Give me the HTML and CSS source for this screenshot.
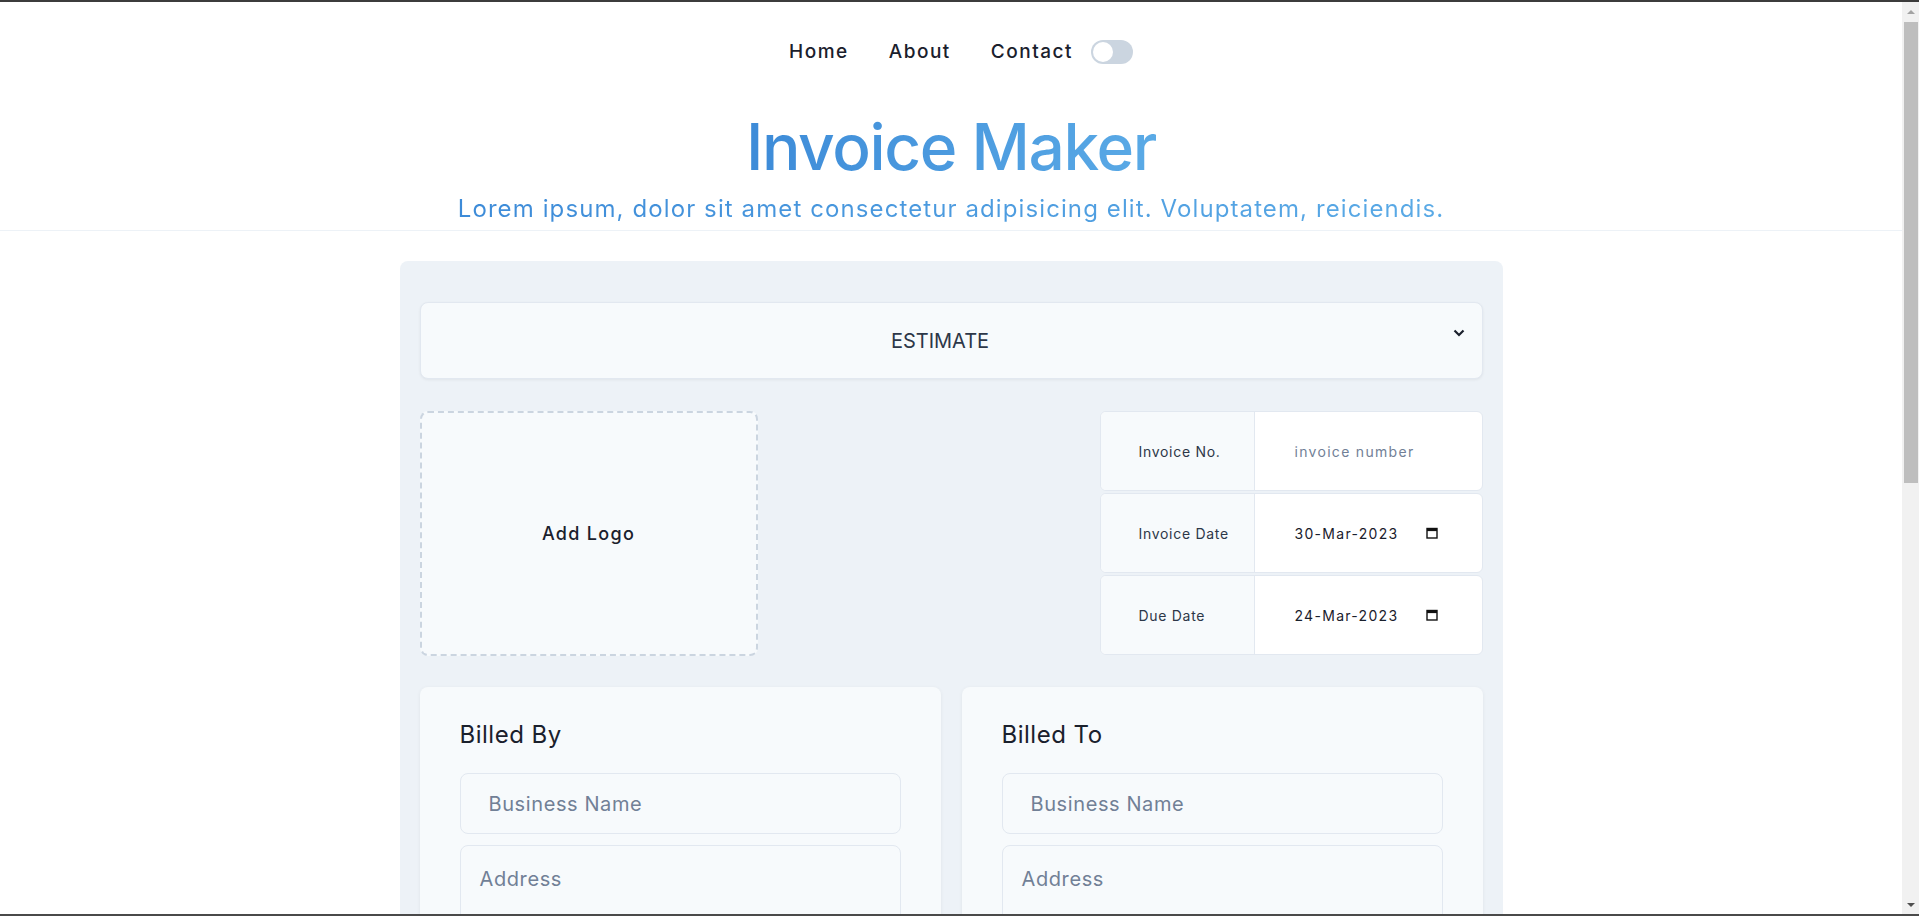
FILE: index.html
```html
<!DOCTYPE html>
<html lang="en">
<head>
<meta charset="utf-8">
<title>Invoice Maker</title>
<link rel="stylesheet" href="styles.css">
</head>
<body>
<div class="frame-top"></div>
<div class="frame-bottom"></div>
<div class="scrollbar" aria-hidden="true">
  <span class="sb-button"><span class="sb-arrow sb-arrow-up"></span></span>
  <span class="sb-track"><span class="sb-thumb"></span></span>
  <span class="sb-button"><span class="sb-arrow sb-arrow-down"></span></span>
</div>
<div class="page">
  <header class="site-header">
    <nav class="nav">
      <a class="nav-link" href="#">Home</a>
      <a class="nav-link" href="#">About</a>
      <a class="nav-link" href="#">Contact</a>
      <span class="toggle"><span class="toggle-knob"></span></span>
    </nav>
    <h1 class="title">Invoice Maker</h1>
    <p class="subtitle">Lorem ipsum, dolor sit amet consectetur adipisicing elit. Voluptatem, reiciendis.</p>
  </header>

  <main class="panel">
    <div class="doc-type">
      <span class="doc-type-text">ESTIMATE</span>
      <svg class="chevron" width="12" height="8" viewBox="0 0 12 8"><polyline points="1.5,1.5 6,6 10.5,1.5" fill="none" stroke="#1a202c" stroke-width="2.2"/></svg>
    </div>

    <div class="meta-row">
      <div class="logo-box">Add Logo</div>
      <div class="meta-table">
        <div class="meta-line">
          <div class="meta-label">Invoice No.</div>
          <div class="meta-value placeholder">invoice number</div>
        </div>
        <div class="meta-line">
          <div class="meta-label">Invoice Date</div>
          <div class="meta-value"><span class="date-text">30-Mar-2023</span><svg class="cal" width="12" height="12" viewBox="0 0 12 12"><rect x="1" y="1.5" width="10" height="9.5" fill="none" stroke="#111" stroke-width="1.4"/><rect x="1" y="1.5" width="10" height="2.6" fill="#111"/></svg></div>
        </div>
        <div class="meta-line">
          <div class="meta-label">Due Date</div>
          <div class="meta-value"><span class="date-text">24-Mar-2023</span><svg class="cal" width="12" height="12" viewBox="0 0 12 12"><rect x="1" y="1.5" width="10" height="9.5" fill="none" stroke="#111" stroke-width="1.4"/><rect x="1" y="1.5" width="10" height="2.6" fill="#111"/></svg></div>
        </div>
      </div>
    </div>

    <div class="parties">
      <section class="party">
        <h2 class="party-title">Billed By</h2>
        <div class="field field-input"><span class="ph">Business Name</span></div>
        <div class="field field-area"><span class="ph">Address</span></div>
        <div class="field field-input"><span class="ph">Email</span></div>
      </section>
      <section class="party">
        <h2 class="party-title">Billed To</h2>
        <div class="field field-input"><span class="ph">Business Name</span></div>
        <div class="field field-area"><span class="ph">Address</span></div>
        <div class="field field-input"><span class="ph">Email</span></div>
      </section>
    </div>

    <section class="items">
      <div class="items-head">
        <span>Item</span><span>Quantity</span><span>Rate</span><span>Amount</span>
      </div>
      <div class="items-row">
        <div class="field field-input"><span class="ph">Item name</span></div>
        <div class="field field-input"><span class="ph">1</span></div>
        <div class="field field-input"><span class="ph">0</span></div>
        <div class="field field-input"><span class="ph">0.00</span></div>
      </div>
      <button class="btn-add" type="button">+ Add Item</button>
    </section>

    <div class="actions">
      <button class="btn" type="button">Download PDF</button>
      <button class="btn btn-light" type="button">Reset</button>
    </div>
  </main>

  <footer class="site-footer">© 2023 Invoice Maker</footer>
</div>
</body>
</html>
```
FILE: styles.css
```css
* { box-sizing: border-box; }
html, body { margin: 0; padding: 0; }

body {
  font-family: "Inter", "Noto Sans", sans-serif;
  color: #1a202c;
  background: #ffffff;
}

/* window frame lines and classic scrollbar */
.frame-top, .frame-bottom {
  position: fixed;
  left: 0;
  right: 0;
  height: 2px;
  background: #3c3c3c;
  z-index: 20;
}
.frame-top { top: 0; }
.frame-bottom { bottom: 0; background: #4a4a4a; }
.scrollbar {
  position: fixed;
  top: 0;
  right: 0;
  bottom: 0;
  width: 17px;
  background: #f1f1f1;
  display: flex;
  flex-direction: column;
  z-index: 10;
}
.sb-button {
  height: 17px;
  display: flex;
  align-items: center;
  justify-content: center;
  flex: none;
}
.sb-track {
  flex: 1;
  padding: 5px 1px 0 2px;
}
.sb-thumb {
  display: block;
  height: 461px;
  background: #bebebe;
}
.sb-arrow {
  width: 0;
  height: 0;
  border-left: 4px solid transparent;
  border-right: 4px solid transparent;
}
.sb-arrow-up { border-bottom: 4px solid #a3a3a3; margin-top: 6px; }
.sb-arrow-down { border-top: 4px solid #505050; margin-bottom: 6px; }

.page {
  margin-right: 17px;
  min-height: 1760px;
}

.site-header {
  border-bottom: 1px solid #edf2f7;
  text-align: center;
  padding-bottom: 5px;
}
.nav {
  display: flex;
  justify-content: center;
  align-items: center;
  padding-top: 38px;
  height: 66px;
}
.nav-link {
  padding: 0 20px;
  font-size: 19px;
  line-height: 28px;
  font-weight: 500;
  letter-spacing: 1.5px;
  color: #1a202c;
  text-decoration: none;
}
.toggle {
  display: inline-flex;
  align-items: center;
  width: 42px;
  height: 24px;
  border-radius: 12px;
  background: #cbd5e0;
  padding: 2px;
  margin-left: -2px;
}
.toggle-knob {
  width: 20px;
  height: 20px;
  border-radius: 50%;
  background: #ffffff;
}
.title {
  margin: 43px 0 0;
  font-size: 64px;
  line-height: 76px;
  font-weight: 500;
  letter-spacing: -1.4px;
  background: linear-gradient(90deg, #3d8bd8, #5aaae6);
  -webkit-background-clip: text;
  background-clip: text;
  color: transparent;
  display: inline-block;
}
.subtitle {
  margin: 8px auto 0;
  font-size: 24px;
  line-height: 32px;
  letter-spacing: 1.1px;
  background: linear-gradient(90deg, #3d8bd8, #5aaae6);
  -webkit-background-clip: text;
  background-clip: text;
  color: transparent;
  width: fit-content;
}

.panel {
  width: 1103px;
  margin: 30px auto 40px;
  background: #edf2f7;
  border-radius: 8px;
  padding: 41px 20px 40px;
}
.doc-type {
  position: relative;
  height: 77px;
  display: flex;
  align-items: center;
  justify-content: center;
  padding-right: 22px;
  background: #f7fafc;
  border: 1px solid #e2e8f0;
  border-radius: 8px;
  box-shadow: 0 1px 3px rgba(0,0,0,0.06);
}
.doc-type-text {
  font-size: 20px;
  color: #2d3748;
}
.chevron {
  position: absolute;
  right: 17px;
  top: 26px;
}

.meta-row {
  margin-top: 32px;
  display: flex;
  justify-content: space-between;
  align-items: flex-start;
}
.logo-box {
  width: 338px;
  height: 245px;
  border: 2px dashed #cbd5e0;
  border-radius: 8px;
  background: #f7fafc;
  display: flex;
  align-items: center;
  justify-content: center;
  font-size: 18px;
  font-weight: 500;
  letter-spacing: 1.3px;
  color: #1a202c;
}
.meta-table {
  width: 383px;
  display: flex;
  flex-direction: column;
  gap: 2px;
}
.meta-line {
  display: flex;
  height: 80px;
  border: 1px solid #e2e8f0;
  border-radius: 6px;
  overflow: hidden;
  background: #ffffff;
}
.meta-label {
  width: 154px;
  background: #f7fafc;
  border-right: 1px solid #e2e8f0;
  display: flex;
  align-items: center;
  padding-left: 38px;
  font-size: 14px;
  letter-spacing: 0.7px;
  color: #2d3748;
}
.meta-value {
  flex: 1;
  display: flex;
  align-items: center;
  padding-left: 40px;
  padding-right: 44px;
  font-size: 14px;
  letter-spacing: 1.3px;
  color: #1a202c;
  justify-content: space-between;
}
.meta-value.placeholder { color: #718096; justify-content: flex-start; }

.parties {
  margin-top: 31px;
  display: grid;
  grid-template-columns: 1fr 1fr;
  gap: 21px;
}
.party {
  background: #f7fafc;
  border-radius: 8px;
  padding: 30px 40px 40px;
  box-shadow: 0 1px 4px rgba(0,0,0,0.06);
}
.party-title {
  margin: 0 0 20px;
  font-size: 24px;
  line-height: 36px;
  font-weight: 400;
  letter-spacing: 0.5px;
  color: #1a202c;
}
.field {
  border: 1px solid #e2e8f0;
  border-radius: 8px;
  background: #f7fafc;
  margin-top: 11px;
}
.field:first-of-type { margin-top: 0; }
.field-input {
  height: 61px;
  display: flex;
  align-items: center;
  padding-left: 28px;
}
.field-area {
  height: 130px;
  padding: 19px;
}
.ph {
  font-size: 20px;
  line-height: 28px;
  letter-spacing: 0.6px;
  color: #718096;
}

.items {
  margin-top: 32px;
  background: #f7fafc;
  border-radius: 8px;
  padding: 30px 40px;
}
.items-head {
  display: grid;
  grid-template-columns: 3fr 1fr 1fr 1fr;
  gap: 16px;
  font-size: 18px;
  font-weight: 500;
  padding: 0 0 16px;
}
.items-row {
  display: grid;
  grid-template-columns: 3fr 1fr 1fr 1fr;
  gap: 16px;
  margin-bottom: 16px;
}
.items-row .field { margin-top: 0; }
.btn-add {
  font-family: inherit;
  font-size: 18px;
  padding: 14px 28px;
  border: 1px dashed #cbd5e0;
  border-radius: 8px;
  background: #ffffff;
  color: #2d3748;
}
.actions {
  margin-top: 32px;
  display: flex;
  justify-content: center;
  gap: 16px;
}
.btn {
  font-family: inherit;
  font-size: 18px;
  padding: 14px 32px;
  border: none;
  border-radius: 8px;
  background: #4299e1;
  color: #ffffff;
}
.btn-light { background: #e2e8f0; color: #2d3748; }
.site-footer {
  text-align: center;
  padding: 30px 0;
  color: #718096;
  font-size: 16px;
}
```
